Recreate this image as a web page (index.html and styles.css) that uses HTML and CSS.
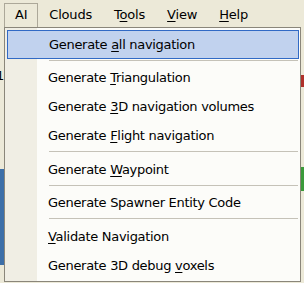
FILE: index.html
```html
<!DOCTYPE html>
<html lang="en">
<head>
  <meta charset="UTF-8">
  <title>AI menu</title>
  <link rel="stylesheet" href="styles.css">
</head>
<body>

  <div class="menubar">
    <div class="menubar-item open">AI</div>
    <div class="menubar-item">Clouds</div>
    <div class="menubar-item">T<u>o</u>ols</div>
    <div class="menubar-item"><u>V</u>iew</div>
    <div class="menubar-item"><u>H</u>elp</div>
  </div>

  <div class="workspace">
    <div class="edge edge-left">
      <span class="edge-glyph">1</span>
      <div class="edge-blue"></div>
    </div>
    <div class="edge edge-right">
      <div class="edge-red"></div>
      <div class="edge-green"></div>
    </div>
  </div>

  <div class="dropdown">
    <div class="item active">Generate <u>a</u>ll navigation</div>
    <div class="sep"></div>
    <div class="item">Generate <u>T</u>riangulation</div>
    <div class="item">Generate <u>3</u>D navigation volumes</div>
    <div class="item">Generate <u>F</u>light navigation</div>
    <div class="sep"></div>
    <div class="item">Generate <u>W</u>aypoint</div>
    <div class="sep"></div>
    <div class="item">Generate Spawner Entity Code</div>
    <div class="sep"></div>
    <div class="item"><u>V</u>alidate Navigation</div>
    <div class="item">Generate 3D debug <u>v</u>oxels</div>
  </div>

</body>
</html>
```

FILE: styles.css
```css
* { margin: 0; padding: 0; box-sizing: border-box; }
body {
  width: 304px;
  height: 283px;
  overflow: hidden;
  position: relative;
  background-color: #ece9d8;
  font-family: "DejaVu Sans", Tahoma, sans-serif;
  font-size: 13px;
  color: #000;
}
u {
  text-decoration-thickness: 1px;
  text-underline-offset: 2px;
}
.menubar {
  display: flex;
  height: 27px;
  padding-left: 4px;
}
.menubar-item {
  margin-top: 3px;
  height: 24px;
  padding: 0 10px;
  line-height: 22px;
  letter-spacing: -0.2px;
  border: 1px solid transparent;
  border-bottom: none;
}
.menubar-item.open {
  border-color: #aca899;
  background-color: #ece9d8;
}
.workspace {
  display: flex;
  justify-content: space-between;
  height: 256px;
}
.edge {
  width: 4px;
  display: flex;
  flex-direction: column;
}
.edge-left {
  overflow: hidden;
}
.edge-glyph {
  margin-top: 41px;
  margin-left: -4px;
  height: 18px;
  font-size: 13px;
}
.edge-blue {
  margin-top: 83px;
  height: 96px;
  background-color: #3d6fa8;
}
.edge-right {
  width: 3px;
}
.edge-red {
  margin-top: 48px;
  height: 12px;
  background-color: #b0302a;
}
.edge-green {
  margin-top: 80px;
  height: 24px;
  background-color: #3a9a3a;
}
.dropdown {
  position: absolute;
  left: 4px;
  top: 27px;
  width: 297px;
  padding: 2px 1px 1px 1px;
  border: 1px solid #8a867a;
  background: linear-gradient(to right, #f0eee4 0, #f0eee4 32px, #fcfcf9 32px);
}
.item {
  height: 29px;
  line-height: 29px;
  padding-left: 42px;
  letter-spacing: -0.3px;
  white-space: nowrap;
}
.item.active {
  margin-left: 1px;
  padding-left: 41px;
  border: 1px solid #316ac5;
  line-height: 27px;
  background-color: #c1d2ee;
}
.sep {
  height: 4.4px;
  margin-left: 43px;
  margin-right: 1px;
  padding-top: 1px;
}
.sep::after {
  content: "";
  display: block;
  height: 1px;
  background-color: #c5c2b8;
}
```
